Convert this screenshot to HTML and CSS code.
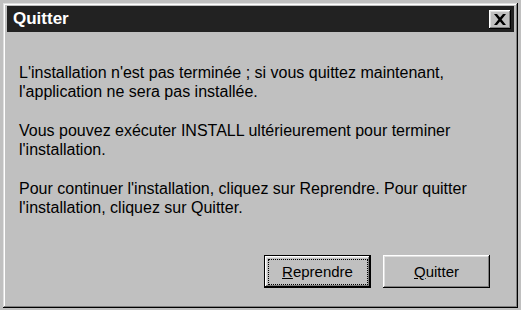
FILE: index.html
```html
<!DOCTYPE html>
<html lang="fr">
<head>
<meta charset="utf-8">
<link rel="stylesheet" href="styles.css">
</head>
<body>
<div class="window">
  <div class="titlebar">
    <span class="title">Quitter</span>
    <button class="close" aria-label="Fermer">
      <svg width="12" height="11" viewBox="0 0 12 11"><path d="M0 0h3l3 3.6L9 0h3L7.6 5.5 12 11H9L6 7.4 3 11H0l4.4-5.5z" fill="#000"/></svg>
    </button>
  </div>
  <div class="content">
    <p>L'installation n'est pas terminée ; si vous quittez maintenant,<br>l'application ne sera pas installée.</p>
    <p>Vous pouvez exécuter INSTALL ultérieurement pour terminer<br>l'installation.</p>
    <p>Pour continuer l'installation, cliquez sur Reprendre. Pour quitter<br>l'installation, cliquez sur Quitter.</p>
  </div>
  <div class="buttons">
    <button class="btn default"><span class="focus"><u>R</u>eprendre</span></button>
    <button class="btn"><span><u>Q</u>uitter</span></button>
  </div>
</div>
</body>
</html>
```

FILE: styles.css
```css
html, body {
  margin: 0;
  padding: 0;
  background: #c0c0c0;
}
body {
  font-family: "Liberation Sans", Arial, sans-serif;
  color: #000;
}
.window {
  margin: 3px 0 0 3px;
  width: 515px;
  height: 305px;
  box-sizing: border-box;
  padding: 3px 4px 4px;
  background: #c0c0c0;
  box-shadow: inset -1px -1px #000, inset 1px 1px #dfdfdf, inset -2px -2px #808080, inset 2px 2px #fff;
  display: flex;
  flex-direction: column;
}
.titlebar {
  height: 26px;
  background: #222;
  display: flex;
  align-items: center;
  justify-content: space-between;
  padding: 0 3px 0 6px;
}
.title {
  color: #fff;
  font-weight: bold;
  font-size: 17px;
}
.close {
  width: 22px;
  height: 19px;
  padding: 0;
  border: 0;
  background: #c0c0c0;
  box-shadow: inset -1px -1px #000, inset 1px 1px #fff, inset -2px -2px #808080, inset 2px 2px #dfdfdf;
  display: flex;
  align-items: center;
  justify-content: center;
}
.content {
  padding: 31px 0 0 12px;
  font-size: 16px;
  line-height: 19px;
  flex: 1;
}
.content p {
  margin: 0 0 20px;
}
.buttons {
  display: flex;
  justify-content: flex-end;
  gap: 12px;
  padding: 0 24px 16px 0;
}
.btn {
  width: 107px;
  height: 33px;
  padding: 0;
  border: 0;
  background: #c0c0c0;
  font-family: "Liberation Sans", Arial, sans-serif;
  font-size: 15px;
  color: #000;
  box-shadow: inset -1px -1px #000, inset 1px 1px #fff, inset -2px -2px #808080, inset 2px 2px #dfdfdf;
  display: flex;
  align-items: center;
  justify-content: center;
}
.btn.default {
  box-shadow: inset 0 0 0 1px #000, inset -2px -2px #000, inset 2px 2px #fff, inset -3px -3px #808080, inset 3px 3px #dfdfdf;
}
.focus {
  display: flex;
  align-items: center;
  justify-content: center;
  width: 98px;
  height: 24px;
  outline: 1px dotted #000;
}
```
